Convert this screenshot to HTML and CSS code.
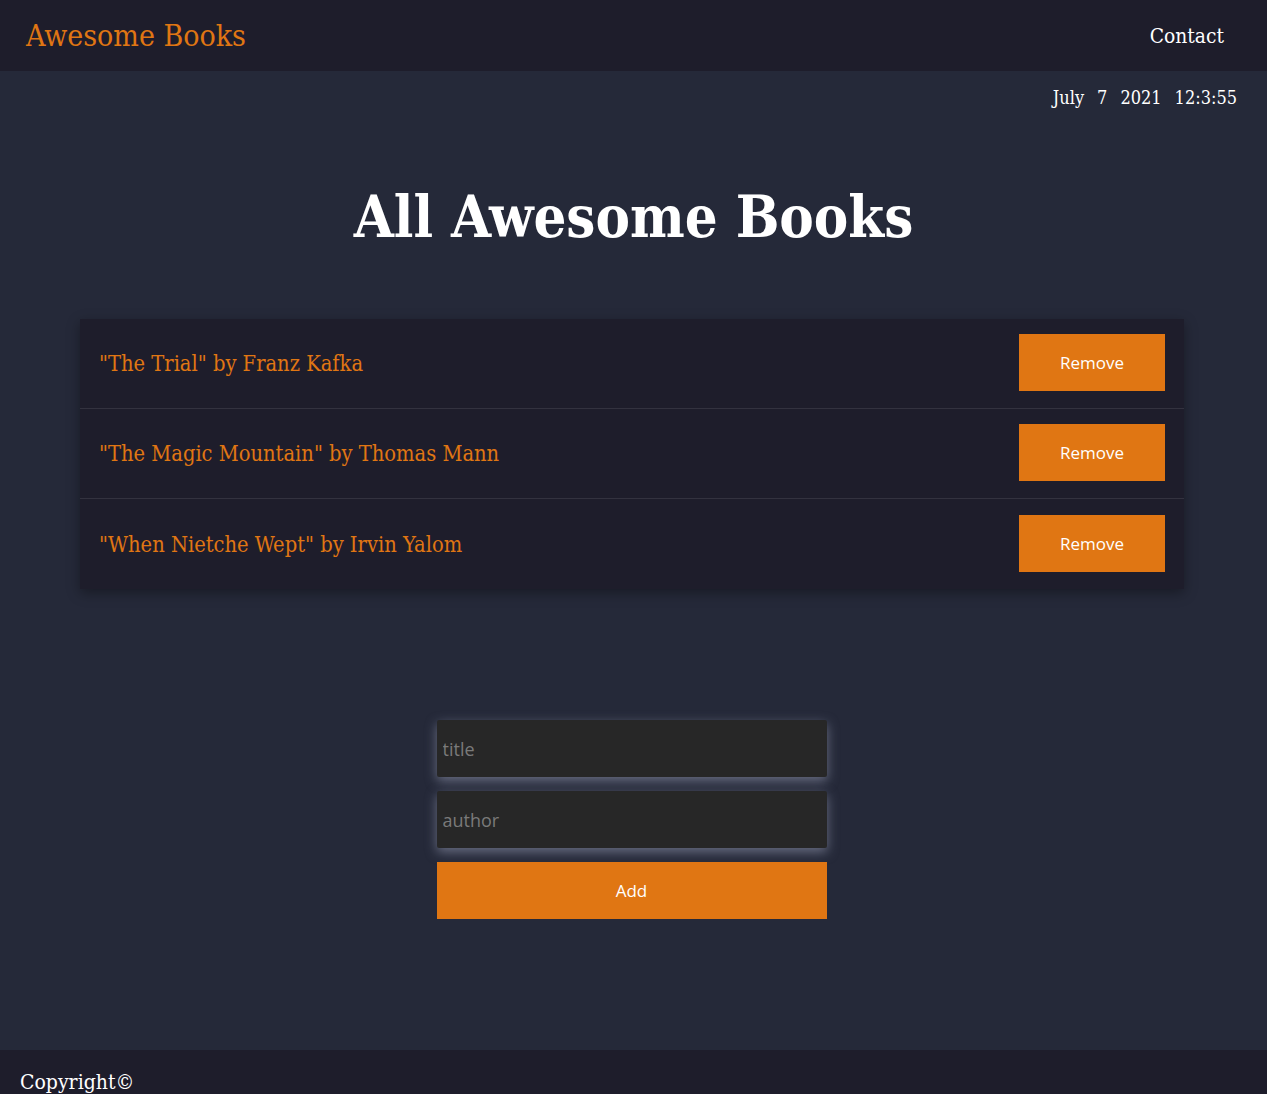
FILE: index.html
```html
<!DOCTYPE html>
<html lang="en">
<head>
<meta charset="utf-8">
<title>Awesome Books</title>
<link rel="stylesheet" href="styles.css">
</head>
<body>
<header class="topbar">
  <a class="brand" href="#">Awesome Books</a>
  <nav class="nav"><a href="#">Contact</a></nav>
</header>
<main class="main">
  <div class="date"><span>July</span><span>7</span><span>2021</span><span>12:3:55</span></div>
  <h1 class="heading">All Awesome Books</h1>
  <ul class="books">
    <li class="book"><span class="book-name">"The Trial" by Franz Kafka</span><button class="btn remove">Remove</button></li>
    <li class="book"><span class="book-name">"The Magic Mountain" by Thomas Mann</span><button class="btn remove">Remove</button></li>
    <li class="book"><span class="book-name">"When Nietche Wept" by Irvin Yalom</span><button class="btn remove">Remove</button></li>
  </ul>
  <form class="form">
    <input class="field" type="text" placeholder="title">
    <input class="field" type="text" placeholder="author">
    <button class="btn add" type="button">Add</button>
  </form>
</main>
<footer class="footer">
  <p class="copy">Copyright©</p>
</footer>
</body>
</html>
```
FILE: styles.css
```css
* { box-sizing: border-box; }
html, body { margin: 0; padding: 0; }
body {
  background: #252939;
  font-family: "DejaVu Serif Condensed", "DejaVu Serif", serif;
  color: #fff;
}
.topbar {
  height: 71px;
  background: #1e1d2b;
  display: flex;
  align-items: center;
  justify-content: space-between;
  padding: 0 43px 0 26px;
}
.brand {
  color: #e07613;
  text-decoration: none;
  font-size: 30px;
  margin-top: -1px;
}
.nav a {
  color: #fff;
  text-decoration: none;
  font-size: 20.8px;
}
.main {
  min-height: 979px;
  padding-top: 16px;
}
.date {
  display: flex;
  justify-content: flex-end;
  gap: 13px;
  padding-right: 30px;
  font-size: 18px;
}
.heading {
  text-align: center;
  font-size: 57.5px;
  font-weight: bold;
  margin: 75px 0 68px;
}
.books {
  list-style: none;
  margin: 0 83px 0 80px;
  padding: 0;
  background: #1e1d2b;
  box-shadow: 0 4px 12px rgba(0,0,0,0.35);
}
.book {
  display: flex;
  align-items: center;
  justify-content: space-between;
  height: 90px;
  padding: 0 19px 0 19px;
  border-bottom: 1px solid #33323f;
}
.book:last-child { border-bottom: none; }
.book-name {
  color: #e07613;
  font-size: 21.7px;
}
.btn {
  background: #e07613;
  color: #fff;
  border: none;
  font-family: "Open Sans", sans-serif;
  font-size: 17px;
  cursor: pointer;
}
.remove {
  width: 146px;
  height: 57px;
  margin-top: -2px;
}
.form {
  width: 390px;
  margin: 131px 0 0 calc(50% - 197px);
  display: flex;
  flex-direction: column;
  gap: 14px;
}
.field {
  height: 57px;
  background: #272727;
  border: none;
  border-radius: 2px;
  padding: 0 6px;
  font-family: "Open Sans", sans-serif;
  font-size: 18px;
  color: #ddd;
  box-shadow: 0 4px 12px rgba(160,165,190,0.55);
}
.field::placeholder { color: #7a7a7a; }
.add {
  height: 57px;
}
.footer {
  background: #1e1d2b;
  height: 60px;
  padding: 0 20px;
  overflow: hidden;
}
.copy {
  margin: 0;
  padding-top: 20px;
  font-size: 21px;
}
```
